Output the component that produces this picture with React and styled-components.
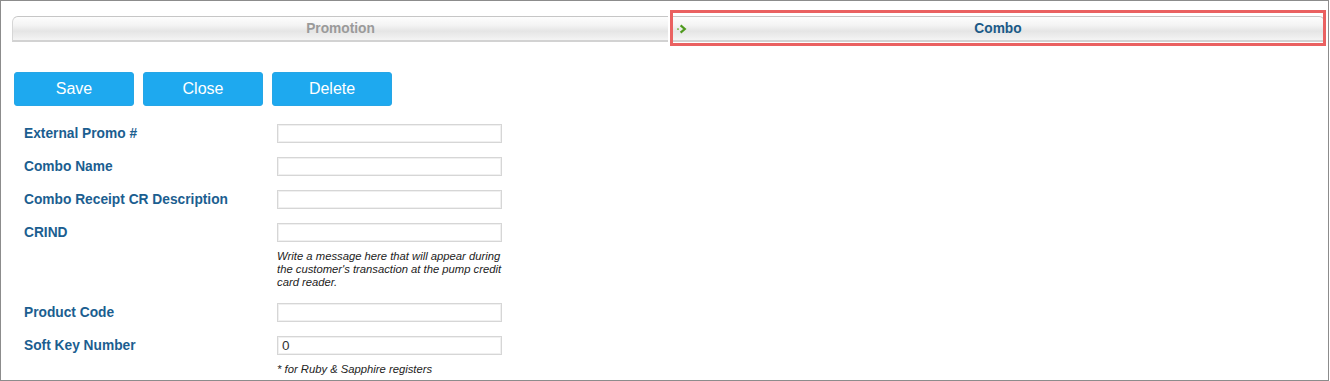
import React from "react"
import styled, { createGlobalStyle } from "styled-components"

const GlobalStyle = createGlobalStyle`
  body {
    margin: 0;
    background: #fff;
    font-family: "Liberation Sans", Arial, sans-serif;
  }
`

const FIELDS = [
  { label: "External Promo #" },
  { label: "Combo Name" },
  { label: "Combo Receipt CR Description" },
  {
    label: "CRIND",
    help: "Write a message here that will appear during the customer's transaction at the pump credit card reader.",
  },
  { label: "Product Code" },
  { label: "Soft Key Number", value: "0", help: "* for Ruby & Sapphire registers" },
]

export default function App() {
  return (
    <>
      <GlobalStyle />
      <Frame>
        <TabBar>
          <Tab first>
            <TabLabel>Promotion</TabLabel>
          </Tab>
          <Tab active>
            <Arrow width="10" height="10" viewBox="0 0 10 10">
              <rect x="0" y="4.3" width="2" height="1.6" fill="#86c05a" />
              <path d="M3.6 1.4 L7.8 5 L3.6 8.6" fill="none" stroke="#4f9a1e" strokeWidth="2.2" />
            </Arrow>
            <TabLabel active>Combo</TabLabel>
            <Highlight />
          </Tab>
        </TabBar>

        <Buttons>
          <Button>Save</Button>
          <Button>Close</Button>
          <Button>Delete</Button>
        </Buttons>

        <Form>
          {FIELDS.map((f) => (
            <Row key={f.label}>
              <Label>{f.label}</Label>
              <Field>
                <Input defaultValue={f.value || ""} />
                {f.help ? <Help>{f.help}</Help> : null}
              </Field>
            </Row>
          ))}
        </Form>
      </Frame>
    </>
  )
}

const Frame = styled.div`
  box-sizing: border-box;
  width: 1329px;
  height: 381px;
  border: 1px solid #8c8c8c;
  overflow: hidden;
`

const TabBar = styled.div`
  display: flex;
  gap: 4px;
  margin: 15px 3px 0 11px;
  height: 26px;
`

const Tab = styled.div`
  position: relative;
  flex: ${(p) => (p.first ? "0 0 656px" : "1")};
  display: flex;
  align-items: center;
  justify-content: center;
  box-sizing: border-box;
  height: 26px;
  border-top: 1px solid #c6c6c6;
  border-bottom: 2px solid #d2d2d2;
  border-left: ${(p) => (p.first ? "1px solid #d6d6d6" : "none")};
  border-right: ${(p) => (p.active ? "1px solid #cfcfcf" : "none")};
  border-top-left-radius: ${(p) => (p.first ? "6px" : "0")};
  border-top-right-radius: ${(p) => (p.active ? "6px" : "0")};
  background: linear-gradient(#fdfdfd 0%, #f4f4f4 35%, #e5e5e5 62%, #efefef 88%, #f4f4f4 100%);

  ${(p) =>
    p.first &&
    `
    &::after {
      content: "";
      position: absolute;
      top: -1px;
      right: -4px;
      width: 1px;
      height: 11px;
      background: #c6c6c6;
      transform: rotate(-35deg);
      transform-origin: top left;
    }
  `}
`

const TabLabel = styled.span`
  font-size: 13.75px;
  font-weight: bold;
  color: ${(p) => (p.active ? "#1b5a87" : "#9a9a9a")};
`

const Arrow = styled.svg`
  position: absolute;
  left: 5px;
  top: 7px;
`

const Highlight = styled.div`
  position: absolute;
  top: -7px;
  left: -2px;
  right: -2px;
  bottom: -6px;
  border: 3px solid #ea6161;
  pointer-events: none;
`

const Buttons = styled.div`
  display: flex;
  gap: 9px;
  margin: 30px 0 0 13px;
`

const Button = styled.button`
  width: 120px;
  height: 34px;
  border: 1px solid #26a6e6;
  border-radius: 3px;
  background: #1ea9ef;
  color: #fff;
  font-family: "Liberation Sans", Arial, sans-serif;
  font-size: 16px;
  padding: 0;
  cursor: pointer;
`

const Form = styled.div`
  display: flex;
  flex-direction: column;
  gap: 14px;
  margin: 18px 0 0 23px;
`

const Row = styled.div`
  display: grid;
  grid-template-columns: 253px 225px;
  align-items: start;
`

const Label = styled.div`
  font-size: 13.75px;
  font-weight: bold;
  color: #1b5e90;
  line-height: 16px;
  padding-top: 2px;
`

const Field = styled.div`
  display: flex;
  flex-direction: column;
`

const Input = styled.input`
  box-sizing: border-box;
  width: 225px;
  height: 19px;
  border: 1px solid #d6d6d6;
  box-shadow: inset 0 0 0 1px #f0f0f0;
  padding: 0 4px;
  font-family: "Liberation Sans", Arial, sans-serif;
  font-size: 13.5px;
  color: #333;
  outline: none;
`

const Help = styled.div`
  margin-top: 8px;
  font-size: 11.25px;
  font-style: italic;
  line-height: 13px;
  color: #222;
`
